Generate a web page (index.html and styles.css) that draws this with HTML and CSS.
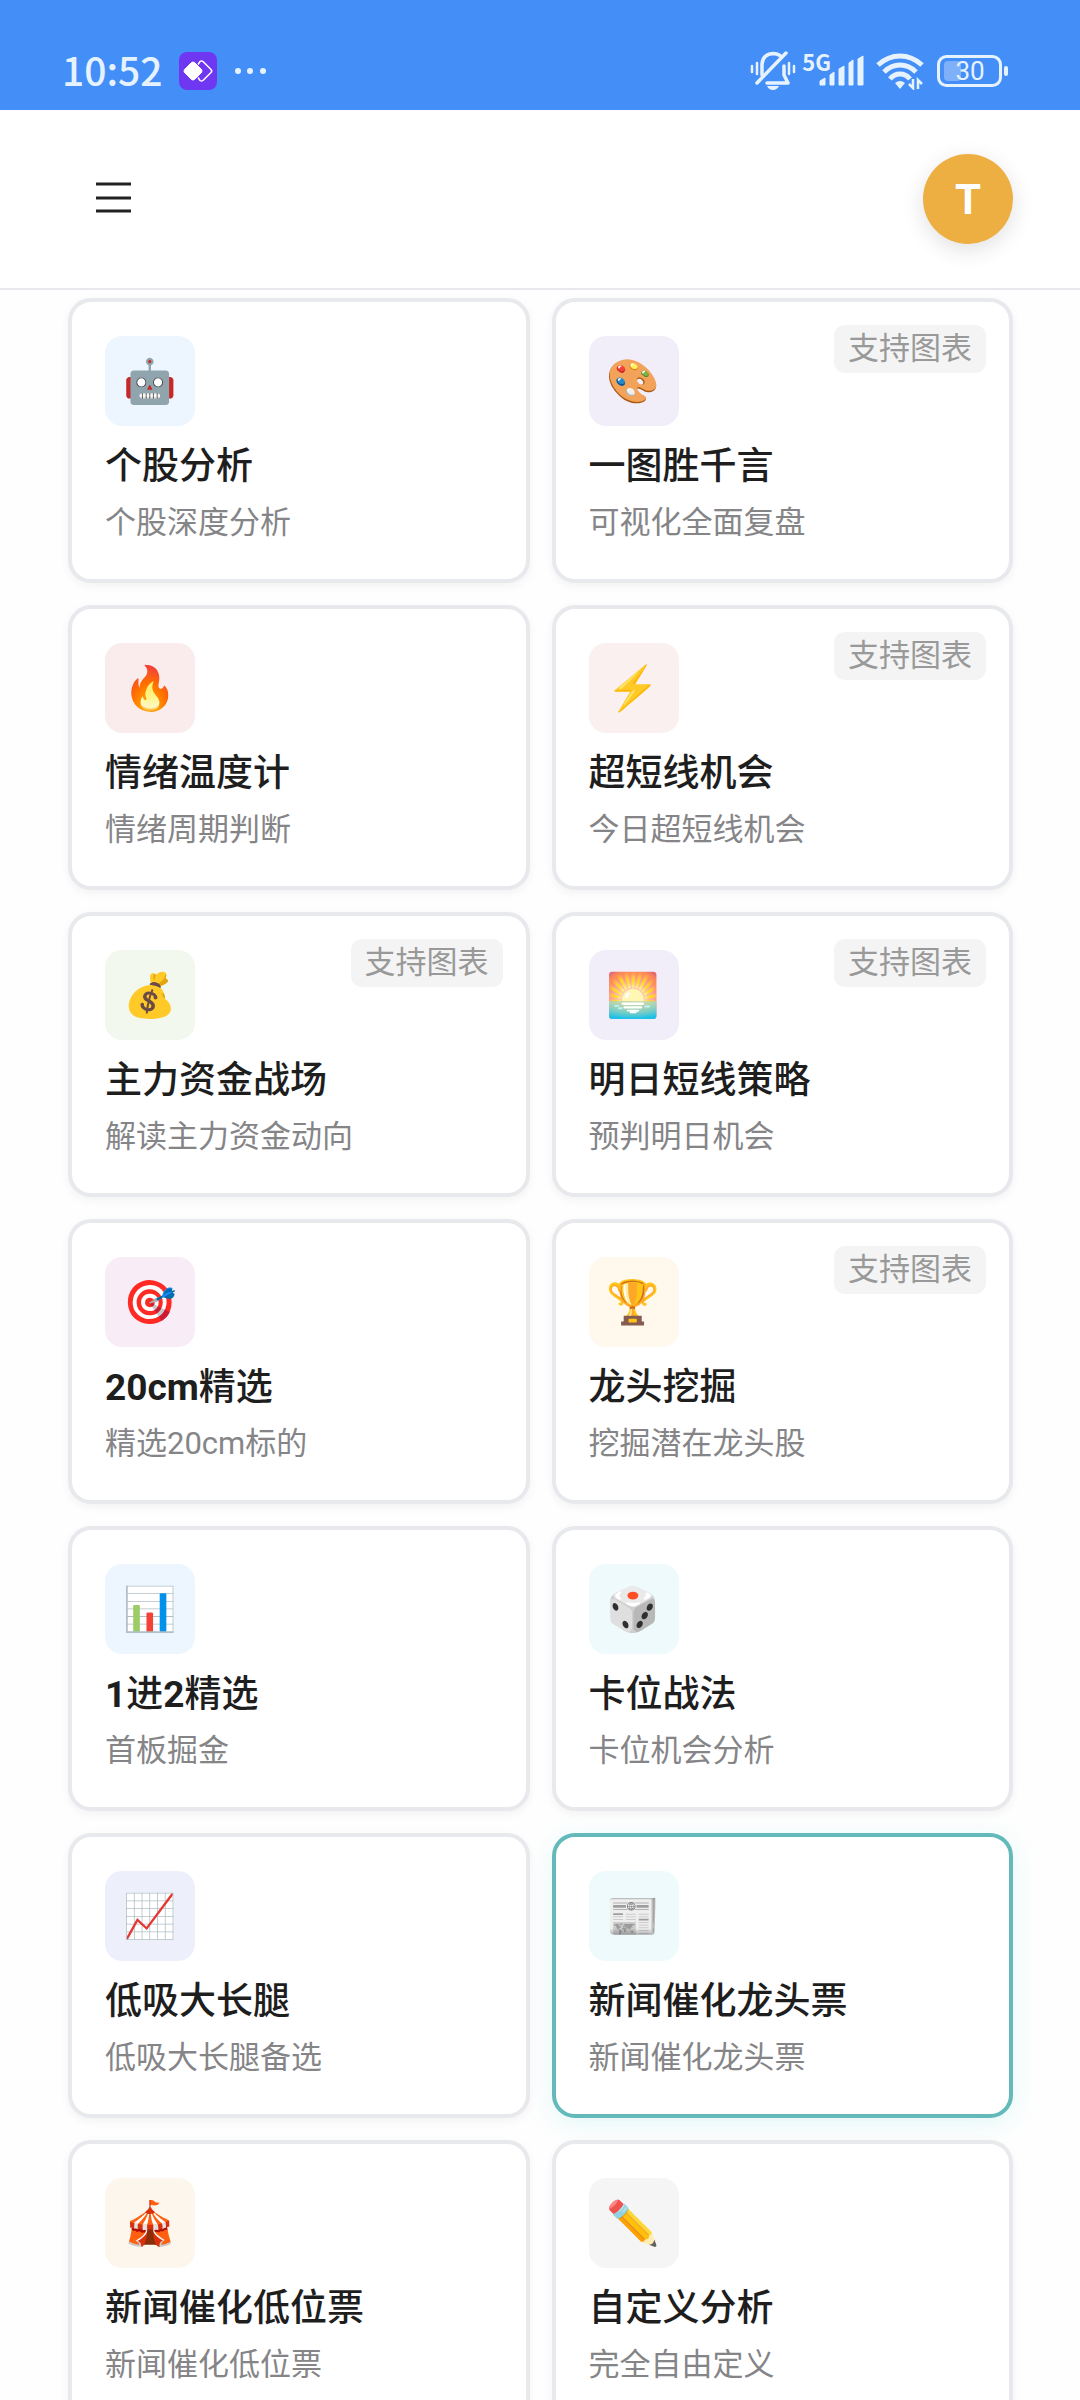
FILE: index.html
```html
<!DOCTYPE html>
<html lang="zh-CN">
<head>
<meta charset="utf-8">
<meta name="viewport" content="width=device-width, initial-scale=1">
<title>个股分析</title>
<link rel="stylesheet" href="styles.css">
</head>
<body>
<div class="status-bar">
  <div class="status-left">
    <time class="clock">10:52</time>
    <svg class="app-icon" width="38" height="38" viewBox="0 0 38 38" aria-hidden="true">
      <rect width="38" height="38" rx="8" fill="#7037f2"/>
      <path d="M19 12.500l2-3q1.500-1.200 3 0l8 8q1.400 1.500 0 3l-8 8q-1.500 1.200-3 0l-2-3" fill="none" stroke="#fff" stroke-width="1.500"/>
      <path d="M12.500 10.500q1.500-1 3 0l7 7q1 1.500 0 3l-7 7q-1.500 1-3 0l-7-7q-1-1.500 0-3z" fill="#fff" stroke="#fff"/>
    </svg>
    <svg width="34" height="8" viewBox="0 0 34 8" fill="#e6f3ff" aria-hidden="true"><circle cx="4" cy="4" r="3"/><circle cx="16" cy="4" r="3"/><circle cx="29" cy="4" r="3"/></svg>
  </div>
  <div class="status-right">
    <svg width="46" height="40" viewBox="0 0 46 40" fill="none" stroke="#e6f3ff" stroke-linecap="round" aria-hidden="true">
      <path d="M2 15v6M7 12v11M39 12v11M44 15v6" stroke-width="2.500"/>
      <path d="M12 24V13Q13 3 23 2.500q4 0 7 2M34 15v9l4 8H17" stroke-width="3.500" stroke-linejoin="round"/>
      <path d="M7 32L36 2" stroke-width="3.500"/>
      <path d="M17 35h12q-2 4-6 4t-6-4z" fill="#e6f3ff" stroke="none"/>
    </svg>
    <span class="network">5G</span>
    <svg class="signal" width="46" height="32" viewBox="0 0 46 32" fill="#e6f3ff" stroke="#e6f3ff" stroke-linejoin="round" aria-hidden="true">
      <path d="M1 26l5-3v7H1zM11 20l4-3v13h-4zM20 14l5-3v19h-5zM30 8l4-3v25h-4zM39 4l5-3v29h-5z"/>
    </svg>
    <svg class="wifi" width="48" height="38" viewBox="0 0 48 38" fill="none" stroke="#e6f3ff" stroke-width="5" aria-hidden="true">
      <path d="M2 13Q12 4 24 4t22 9M8 20q7-7 16-7t16 7M14 27q4-5 10-5t10 5"/>
      <path d="M19 31q5-4 10 0l-5 6z" fill="#e6f3ff" stroke="none"/>
      <path d="M37 27v9l-4-4M42 37v-9l4 4" stroke-width="2.500"/>
    </svg>
    <svg width="72" height="32" viewBox="0 0 72 32" aria-hidden="true">
      <rect x="1.500" y="1.500" width="62" height="29" rx="8" fill="none" stroke="#e6f3ff" stroke-width="3"/>
      <rect x="7" y="6" width="17" height="20" rx="4" fill="#7fb1fa"/>
      <rect x="67" y="11" width="4" height="10" rx="2" fill="#e6f3ff"/>
      <text class="battery-level" x="33" y="25" text-anchor="middle">30</text>
    </svg>
  </div>
</div>

<header class="top-bar">
  <button class="menu-button" type="button" aria-label="菜单">
    <svg width="36" height="34" viewBox="0 0 36 34" stroke="#222" stroke-width="3" aria-hidden="true"><path d="M1 2h35M1 16h35M1 29h35"/></svg>
  </button>
  <button class="avatar" type="button">T</button>
</header>

<main class="feature-list">
  <button class="card" type="button"><span class="icon blue">🤖</span><span class="title">个股分析</span><span class="desc">个股深度分析</span></button>
  <button class="card" type="button"><span class="icon violet">🎨</span><span class="title">一图胜千言</span><span class="desc">可视化全面复盘</span><span class="tag">支持图表</span></button>
  <button class="card" type="button"><span class="icon red">🔥</span><span class="title">情绪温度计</span><span class="desc">情绪周期判断</span></button>
  <button class="card" type="button"><span class="icon coral">⚡</span><span class="title">超短线机会</span><span class="desc">今日超短线机会</span><span class="tag">支持图表</span></button>
  <button class="card" type="button"><span class="icon green">💰</span><span class="title">主力资金战场</span><span class="desc">解读主力资金动向</span><span class="tag">支持图表</span></button>
  <button class="card" type="button"><span class="icon violet">🌅</span><span class="title">明日短线策略</span><span class="desc">预判明日机会</span><span class="tag">支持图表</span></button>
  <button class="card" type="button"><span class="icon pink">🎯</span><span class="title"><b>20cm</b>精选</span><span class="desc">精选20cm标的</span></button>
  <button class="card" type="button"><span class="icon amber">🏆</span><span class="title">龙头挖掘</span><span class="desc">挖掘潜在龙头股</span><span class="tag">支持图表</span></button>
  <button class="card" type="button"><span class="icon blue">📊</span><span class="title"><b>1</b>进<b>2</b>精选</span><span class="desc">首板掘金</span></button>
  <button class="card" type="button"><span class="icon cyan">🎲</span><span class="title">卡位战法</span><span class="desc">卡位机会分析</span></button>
  <button class="card" type="button"><span class="icon indigo">📈</span><span class="title">低吸大长腿</span><span class="desc">低吸大长腿备选</span></button>
  <button class="card selected" type="button"><span class="icon cyan">📰</span><span class="title">新闻催化龙头票</span><span class="desc">新闻催化龙头票</span></button>
  <button class="card" type="button"><span class="icon orange">🎪</span><span class="title">新闻催化低位票</span><span class="desc">新闻催化低位票</span></button>
  <button class="card" type="button"><span class="icon gray">✏️</span><span class="title">自定义分析</span><span class="desc">完全自由定义</span></button>
</main>
</body>
</html>
```

FILE: styles.css
```css
* { box-sizing: border-box; }

body {
  margin: 0;
  height: 100vh;
  display: flex;
  flex-direction: column;
  background: #fefefe;
  color: #1e1e1e;
  font-family: Roboto, "Noto Sans CJK SC", sans-serif;
}

button {
  margin: 0;
  padding: 0;
  border: 0;
  background: none;
  color: inherit;
  font-family: inherit;
  cursor: pointer;
}

svg { display: block; flex: none; }

.status-bar {
  flex: none;
  display: flex;
  justify-content: space-between;
  align-items: center;
  padding: 31px 71px 0 62px;
  height: 110px;
  background: #448ef8;
  color: #e6f3ff;
}

.status-left,
.status-right { display: flex; align-items: center; }

.clock {
  padding-bottom: 4px;
  font: 500 39px/48px "Noto Sans CJK SC", sans-serif;
}

.app-icon { margin: 0 17px 0 16px; }

.network {
  align-self: flex-start;
  margin-left: 6px;
  font: 700 22px/20px "Noto Sans CJK SC", sans-serif;
}

.signal { margin-left: -12px; }
.wifi { margin: 0 13px 0 11px; }

.battery-level {
  fill: #e6f3ff;
  font: 400 26px Roboto, sans-serif;
}

.top-bar {
  flex: none;
  display: flex;
  justify-content: space-between;
  align-items: center;
  height: 180px;
  padding: 0 67px 0 68px;
  background: #fff;
  border-bottom: 2px solid #e8e9ed;
}

.menu-button {
  display: grid;
  place-items: center;
  width: 90px;
  height: 90px;
}

.avatar {
  width: 90px;
  height: 90px;
  border-radius: 50%;
  background: #edae42;
  box-shadow: 0 6px 22px rgba(0, 0, 0, 0.12);
  color: #fff;
  font-size: 42px;
  font-weight: 700;
}

.feature-list {
  flex: 1;
  min-height: 0;
  overflow-y: auto;
  scrollbar-width: none;
  display: grid;
  grid-template-columns: 1fr 1fr;
  align-content: start;
  gap: 22px;
  padding: 8px 67px 22px 68px;
}

.card {
  position: relative;
  display: flex;
  flex-direction: column;
  align-items: flex-start;
  padding: 34px 33px;
  border: 4px solid #e8e9ed;
  border-radius: 23px;
  background: #fff;
  box-shadow: 0 3px 10px rgba(0, 0, 0, 0.05);
  text-align: left;
}

.card.selected {
  border-color: #64b9ba;
  box-shadow: 0 6px 24px rgba(80, 210, 210, 0.15);
}

.icon {
  display: grid;
  place-items: center;
  width: 90px;
  height: 90px;
  border-radius: 17px;
  font: 43px/50px "Noto Color Emoji", sans-serif;
}

.blue { background: #edf6fe; }
.violet { background: #f1eefa; }
.red { background: #faeced; }
.coral { background: #faf0f0; }
.green { background: #f2f8ed; }
.pink { background: #f8edf6; }
.amber { background: #fef8ed; }
.cyan { background: #eefafb; }
.indigo { background: #edf0fb; }
.orange { background: #fdf6ed; }
.gray { background: #f5f5f5; }

.title {
  margin-top: 17px;
  font-size: 37px;
  line-height: 48px;
  font-weight: 500;
}

.desc {
  margin-top: 10px;
  color: #858588;
  font-size: 31px;
  line-height: 44px;
}

.tag {
  position: absolute;
  top: 23px;
  right: 23px;
  padding: 0 14px;
  border-radius: 11px;
  background: #f4f4f4;
  color: #999;
  font-size: 31px;
  line-height: 48px;
}
```
